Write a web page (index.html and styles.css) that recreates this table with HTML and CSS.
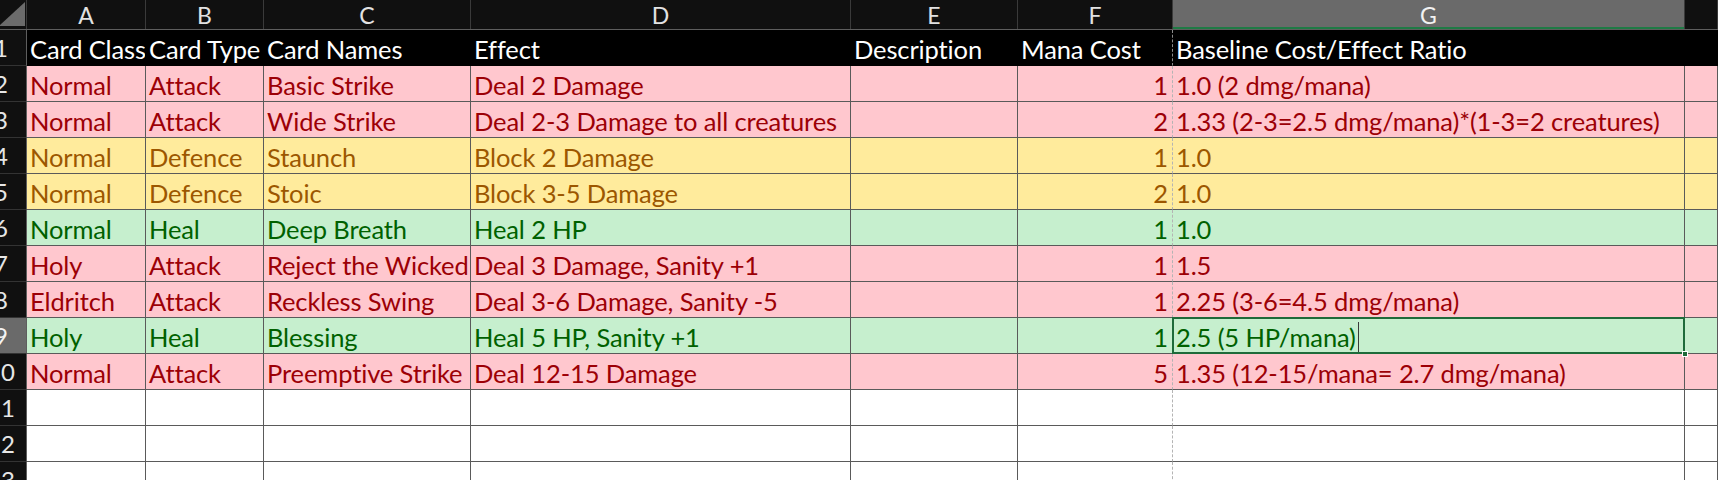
FILE: index.html
```html
<!DOCTYPE html>
<html lang="en">
<head>
<meta charset="utf-8">
<title>Cards</title>
<link rel="stylesheet" href="styles.css">
</head>
<body>
<div class="sheet">
  <div class="row colhead">
    <div class="corner"><svg width="27" height="29" viewBox="0 0 27 29"><polygon points="25,2 25,26 0,26 0,25" fill="#6b6b6b"/></svg></div>
    <div class="ch">A</div><div class="ch">B</div><div class="ch">C</div><div class="ch">D</div><div class="ch">E</div><div class="ch">F</div><div class="ch sel">G</div><div class="ch"></div>
  </div>

  <div class="row hdr">
    <div class="rh"><span>1</span></div>
    <div class="c">Card Class</div><div class="c">Card Type</div><div class="c">Card Names</div><div class="c">Effect</div><div class="c">Description</div><div class="c pb">Mana Cost</div><div class="c">Baseline Cost/Effect Ratio</div><div class="c"></div>
  </div>

  <div class="row bad">
    <div class="rh"><span>2</span></div>
    <div class="c">Normal</div><div class="c">Attack</div><div class="c">Basic Strike</div><div class="c">Deal 2 Damage</div><div class="c"></div><div class="c num pb">1</div><div class="c">1.0 (2 dmg/mana)</div><div class="c"></div>
  </div>

  <div class="row bad">
    <div class="rh"><span>3</span></div>
    <div class="c">Normal</div><div class="c">Attack</div><div class="c">Wide Strike</div><div class="c">Deal 2-3 Damage to all creatures</div><div class="c"></div><div class="c num pb">2</div><div class="c">1.33 (2-3=2.5 dmg/mana)*(1-3=2 creatures)</div><div class="c"></div>
  </div>

  <div class="row neutral">
    <div class="rh"><span>4</span></div>
    <div class="c">Normal</div><div class="c">Defence</div><div class="c">Staunch</div><div class="c">Block 2 Damage</div><div class="c"></div><div class="c num pb">1</div><div class="c">1.0</div><div class="c"></div>
  </div>

  <div class="row neutral">
    <div class="rh"><span>5</span></div>
    <div class="c">Normal</div><div class="c">Defence</div><div class="c">Stoic</div><div class="c">Block 3-5 Damage</div><div class="c"></div><div class="c num pb">2</div><div class="c">1.0</div><div class="c"></div>
  </div>

  <div class="row good">
    <div class="rh"><span>6</span></div>
    <div class="c">Normal</div><div class="c">Heal</div><div class="c">Deep Breath</div><div class="c">Heal 2 HP</div><div class="c"></div><div class="c num pb">1</div><div class="c">1.0</div><div class="c"></div>
  </div>

  <div class="row bad">
    <div class="rh"><span>7</span></div>
    <div class="c">Holy</div><div class="c">Attack</div><div class="c">Reject the Wicked</div><div class="c">Deal 3 Damage, Sanity +1</div><div class="c"></div><div class="c num pb">1</div><div class="c">1.5</div><div class="c"></div>
  </div>

  <div class="row bad">
    <div class="rh"><span>8</span></div>
    <div class="c">Eldritch</div><div class="c">Attack</div><div class="c">Reckless Swing</div><div class="c">Deal 3-6 Damage, Sanity -5</div><div class="c"></div><div class="c num pb">1</div><div class="c">2.25 (3-6=4.5 dmg/mana)</div><div class="c"></div>
  </div>

  <div class="row good">
    <div class="rh selrow"><span>9</span></div>
    <div class="c">Holy</div><div class="c">Heal</div><div class="c">Blessing</div><div class="c">Heal 5 HP, Sanity +1</div><div class="c"></div><div class="c num pb">1</div><div class="c active">2.5 (5 HP/mana)<span class="caret"></span><span class="handle"></span></div><div class="c"></div>
  </div>

  <div class="row bad">
    <div class="rh"><span>10</span></div>
    <div class="c">Normal</div><div class="c">Attack</div><div class="c">Preemptive Strike</div><div class="c">Deal 12-15 Damage</div><div class="c"></div><div class="c num pb">5</div><div class="c">1.35 (12-15/mana= 2.7 dmg/mana)</div><div class="c"></div>
  </div>

  <div class="row blank">
    <div class="rh"><span>11</span></div>
    <div class="c"></div><div class="c"></div><div class="c"></div><div class="c"></div><div class="c"></div><div class="c pb"></div><div class="c"></div><div class="c"></div>
  </div>

  <div class="row blank">
    <div class="rh"><span>12</span></div>
    <div class="c"></div><div class="c"></div><div class="c"></div><div class="c"></div><div class="c"></div><div class="c pb"></div><div class="c"></div><div class="c"></div>
  </div>

  <div class="row blank">
    <div class="rh"><span>13</span></div>
    <div class="c"></div><div class="c"></div><div class="c"></div><div class="c"></div><div class="c"></div><div class="c pb"></div><div class="c"></div><div class="c"></div>
  </div>
</div>
</body>
</html>
```
FILE: styles.css
```css
* { box-sizing: border-box; }

html, body {
  margin: 0;
  padding: 0;
  background: #ffffff;
  overflow: hidden;
}

body {
  width: 1718px;
  height: 480px;
  font-family: "Lato", "Liberation Sans", sans-serif;
}

.sheet {
  --cols: 27px 119px 118px 207px 380px 167px 155px 512px 1fr;
  display: flex;
  flex-direction: column;
}

.row {
  display: grid;
  grid-template-columns: var(--cols);
  height: 36px;
  flex: none;
}

/* column letters */
.colhead {
  height: 30px;
  background: #101010;
  border-bottom: 1px solid #5e5e5e;
}

.corner {
  border-right: 1px solid #3a3a3a;
  overflow: hidden;
}

.corner svg { display: block; }

.ch {
  display: flex;
  align-items: center;
  justify-content: center;
  color: #e2e2e2;
  font-size: 23px;
  border-right: 1px solid #3a3a3a;
  padding-top: 1px;
}

.ch.sel {
  background: #6a6a6a;
  color: #f2f2f2;
  box-shadow: inset 0 -2px 0 #1f7a45;
}

/* row numbers */
.rh {
  display: flex;
  justify-content: flex-end;
  align-items: center;
  overflow: hidden;
  background: #101010;
  color: #e6e6e6;
  font-size: 24px;
  border-right: 1px solid #5e5e5e;
  border-bottom: 1px solid #333333;
}

.rh span {
  flex: none;
  width: 50px;
  text-align: center;
}

.rh.selrow {
  background: #6a6a6a;
  color: #f4f4f4;
}

/* cells */
.c {
  display: flex;
  align-items: flex-end;
  white-space: nowrap;
  overflow: hidden;
  font-size: 25.5px;
  line-height: 24px;
  letter-spacing: -0.12px;
  padding: 0 4px 4px 3px;
  border-right: 1px solid #5a5a5a;
  border-bottom: 1px solid #5a5a5a;
}

.c.num { justify-content: flex-end; }

.c.pb { border-right: 1px dashed #b4b4b4; }

.hdr .c {
  background: #000000;
  color: #ffffff;
  border-right-color: #000000;
  border-bottom-color: #000000;
}

.hdr .c.pb { border-right: 1px dashed #8a8a8a; }

.bad .c { background: #ffc7ce; color: #9c0006; }
.neutral .c { background: #ffeb9c; color: #9c5700; }
.good .c { background: #c6efce; color: #006100; }
.blank .c { background: #ffffff; }

.c.active {
  position: relative;
  overflow: visible;
}

.c.active::after {
  content: "";
  position: absolute;
  left: -1px;
  top: -1px;
  right: -1px;
  bottom: -1px;
  border: 2px solid #1e6b3a;
  pointer-events: none;
}

.caret {
  display: inline-block;
  width: 1px;
  height: 30px;
  margin-left: 2px;
  margin-bottom: -3px;
  background: #3a3a3a;
}

.handle {
  position: absolute;
  right: -4px;
  bottom: -4px;
  width: 6px;
  height: 6px;
  background: #1e6b3a;
  border: 1px solid #ffffff;
  z-index: 2;
}
```
